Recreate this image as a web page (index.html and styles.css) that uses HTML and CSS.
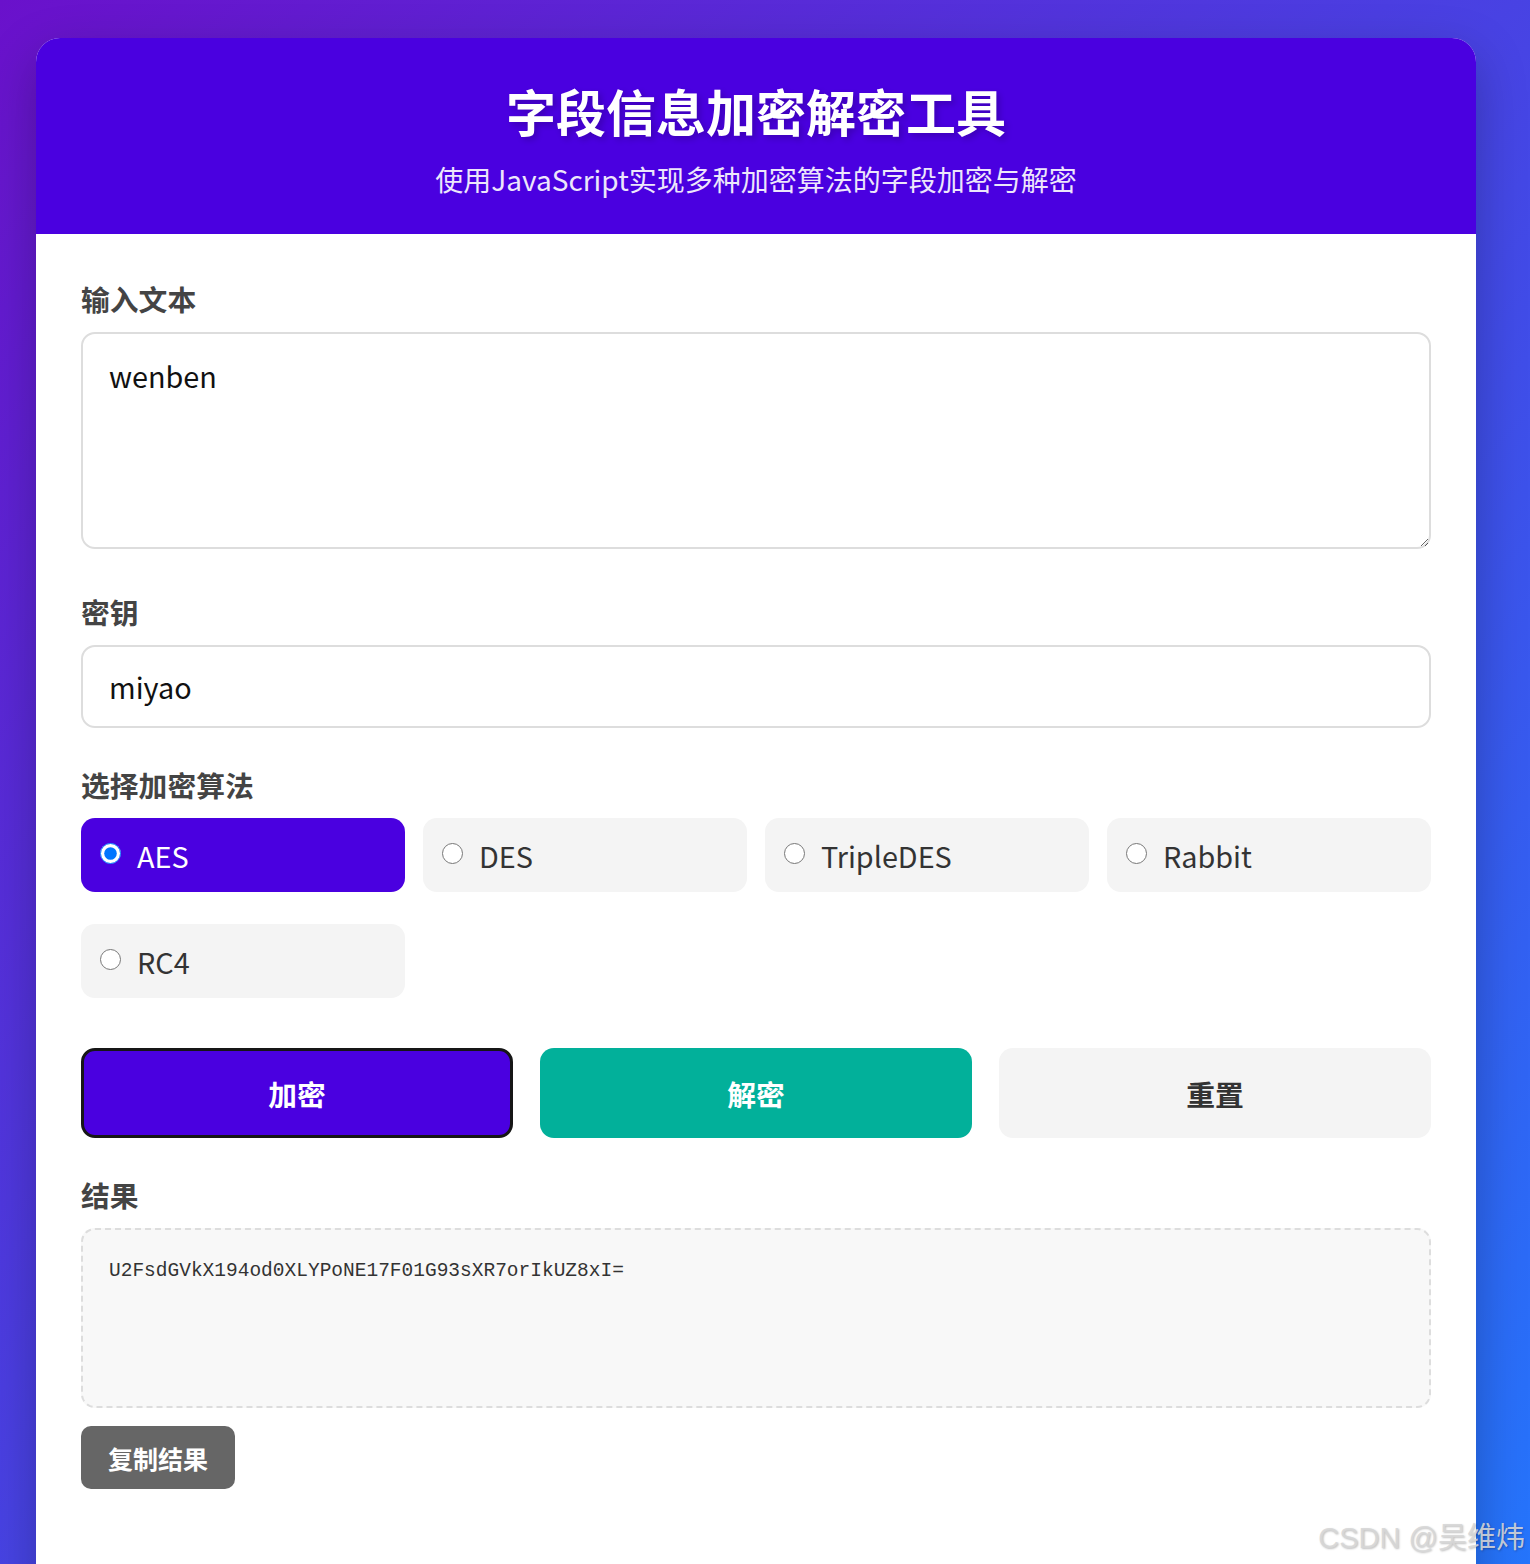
FILE: index.html
```html
<!DOCTYPE html>
<html lang="zh-CN">

<head>
    <meta charset="UTF-8">
    <meta name="viewport" content="width=device-width, initial-scale=1.0">
    <title>字段信息加密解密工具</title>
    <link rel="stylesheet" href="styles.css">
</head>

<body>
    <div class="container">
        <div class="header">
            <h1>字段信息加密解密工具</h1>
            <p>使用JavaScript实现多种加密算法的字段加密与解密</p>
        </div>

        <div class="content">
            <div class="form-group">
                <label for="inputText">输入文本</label>
                <textarea id="inputText">wenben</textarea>
            </div>

            <div class="form-group key-group">
                <label for="secretKey">密钥</label>
                <input type="text" id="secretKey" value="miyao">
            </div>

            <div class="form-group algo-group">
                <label>选择加密算法</label>
                <div class="algorithms">
                    <label class="algo selected"><input type="radio" name="algo" value="AES" checked>AES</label>
                    <label class="algo"><input type="radio" name="algo" value="DES">DES</label>
                    <label class="algo"><input type="radio" name="algo" value="TripleDES">TripleDES</label>
                    <label class="algo"><input type="radio" name="algo" value="Rabbit">Rabbit</label>
                    <label class="algo"><input type="radio" name="algo" value="RC4">RC4</label>
                </div>
            </div>

            <div class="buttons">
                <button type="button" class="btn encryptbtn">加密</button>
                <button type="button" class="btn decryptbtn">解密</button>
                <button type="button" class="btn resetbtn">重置</button>
            </div>

            <div class="form-group result-group">
                <label>结果</label>
                <div class="result" id="result">U2FsdGVkX194od0XLYPoNE17F01G93sXR7orIkUZ8xI=</div>
                <button type="button" class="copybtn">复制结果</button>
            </div>
        </div>
    </div>

    <!-- screenshot watermark -->
    <div class="watermark">CSDN @吴维炜</div>
</body>

</html>
```

FILE: styles.css
```css
html,
body {
    height: 100%;
}

body {
    margin: 0;
    padding: 38px 54px 0 36px;
    box-sizing: border-box;
    overflow: hidden;
    font-family: "Noto Sans CJK SC", "Noto Sans", sans-serif;
    background: linear-gradient(135deg, #6a11cb 0%, #2575fc 100%);
    position: relative;
}

.container {
    width: 1440px;
    background-color: white;
    border-radius: 24px;
    box-shadow: 0 18px 50px rgba(0, 0, 0, 0.25);
    overflow: hidden;
    padding-bottom: 120px;
}

.header {
    height: 196px;
    box-sizing: border-box;
    padding-top: 42px;
    background-color: #4a00e0;
    color: white;
    text-align: center;
}

.header h1 {
    margin: 0;
    font-size: 50px;
    line-height: 60px;
    font-weight: bold;
    text-shadow: 3px 3px 6px rgba(0, 0, 0, 0.2);
}

.header p {
    margin: 19px 0 0;
    font-size: 28px;
    line-height: 40px;
    opacity: 0.9;
}

.content {
    padding: 46px 45px 0;
}

.form-group {
    display: flow-root;
    margin-bottom: 38px;
}

.form-group > label {
    display: block;
    font-size: 28.8px;
    line-height: 38px;
    font-weight: bold;
    color: #444;
    margin-bottom: 14px;
}

textarea,
input[type="text"] {
    width: 100%;
    box-sizing: border-box;
    border: 2px solid #ddd;
    border-radius: 14px;
    padding: 25px 26px;
    font-family: inherit;
    font-size: 28.8px;
    color: #111;
    outline: none;
}

textarea {
    display: block;
    height: 217px;
    line-height: 34px;
    resize: vertical;
    margin-bottom: 6px;
}

input[type="text"] {
    display: block;
    height: 83px;
    padding-top: 0;
    padding-bottom: 0;
}

.algorithms {
    display: grid;
    grid-template-columns: repeat(4, 1fr);
    column-gap: 18px;
    row-gap: 32px;
}

.algo {
    display: flex;
    align-items: center;
    height: 74px;
    padding: 0 18px;
    background-color: #f4f4f4;
    border-radius: 14px;
    font-size: 28.8px;
    color: #333;
    cursor: pointer;
}

.algo input {
    width: 21px;
    height: 21px;
    margin: 0 16px 3px 1px;
}

.algo.selected {
    background-color: #4a00e0;
    color: white;
}

.algo-group {
    margin-bottom: 50px;
}

.buttons {
    display: grid;
    grid-template-columns: repeat(3, 1fr);
    gap: 27px;
    margin-bottom: 38px;
}

.btn {
    height: 90px;
    border: 3px solid transparent;
    border-radius: 14px;
    font-family: inherit;
    font-size: 28.8px;
    font-weight: bold;
    cursor: pointer;
}

.encryptbtn {
    background-color: #4a00e0;
    border-color: #161616;
    color: white;
}

.decryptbtn {
    background-color: #02b09a;
    color: white;
}

.resetbtn {
    background-color: #f4f4f4;
    color: #333;
}

.result-group {
    margin-bottom: 0;
}

.result {
    height: 180px;
    box-sizing: border-box;
    padding: 27px 26px;
    background-color: #f8f8f8;
    border: 2px dashed #ddd;
    border-radius: 14px;
    font-family: "Liberation Mono", monospace;
    font-size: 19.5px;
    line-height: 28px;
    color: #333;
    word-break: break-all;
}

.copybtn {
    margin-top: 18px;
    height: 63px;
    padding: 0 27px;
    background-color: #666;
    color: white;
    border: none;
    border-radius: 10px;
    font-family: inherit;
    font-size: 25px;
    font-weight: bold;
    cursor: pointer;
}

.watermark {
    position: absolute;
    right: 5px;
    bottom: 8px;
    font-family: "Liberation Sans", "Noto Sans CJK SC", sans-serif;
    font-size: 29px;
    color: rgba(215, 215, 215, 0.9);
    text-shadow: 1px 1px 2px rgba(0, 0, 0, 0.25);
}
```
